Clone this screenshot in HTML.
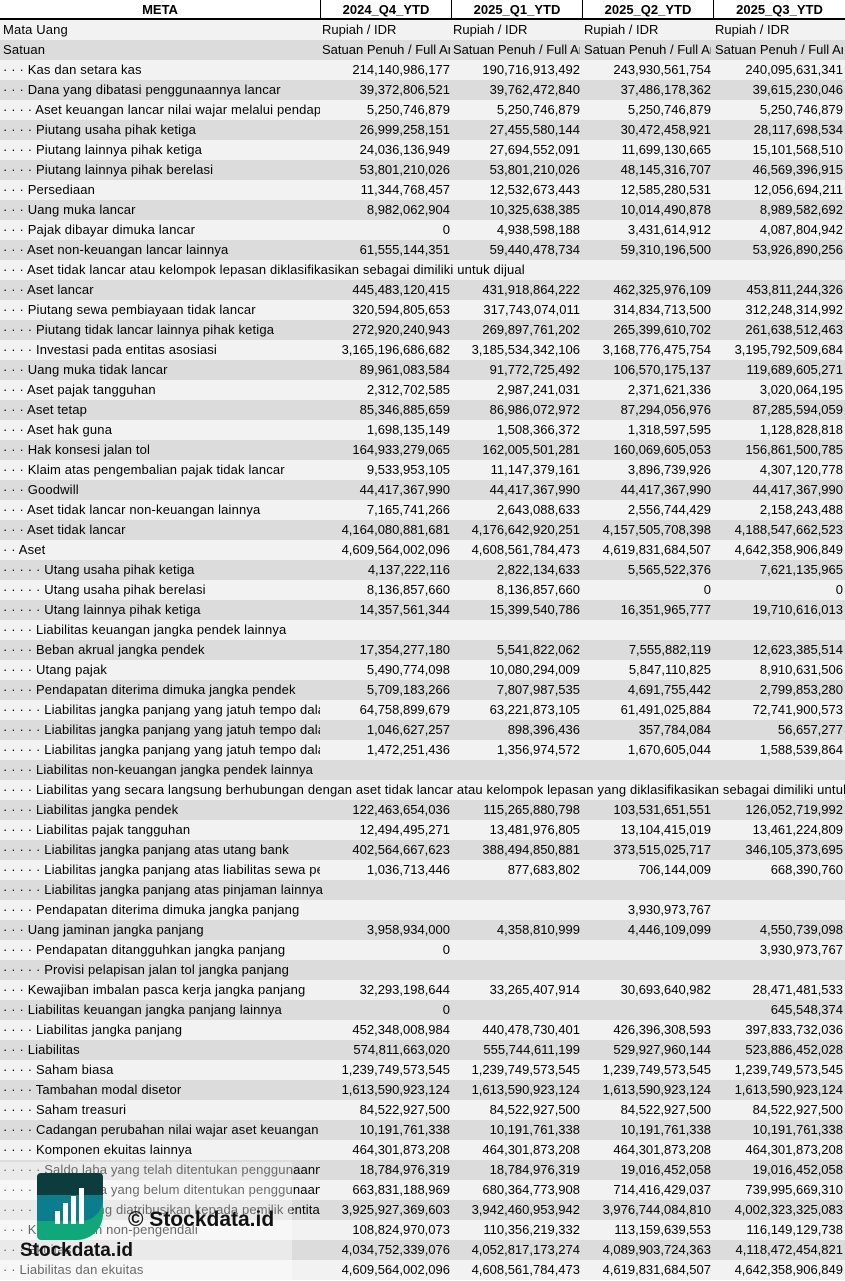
<!DOCTYPE html>
<html><head><meta charset="utf-8">
<style>
*{margin:0;padding:0;box-sizing:border-box}
body{width:845px;height:1281px;overflow:hidden;background:#fff;font-family:"Liberation Sans",Arial,sans-serif;font-size:13px;color:#000;position:relative}
.r{position:absolute;left:0;width:845px;height:20px;line-height:20px;white-space:nowrap}
.r.a{background:#f2f2f2}.r.b{background:#dcdcdc}
.l{position:absolute;left:3px;top:0;height:20px;letter-spacing:0.15px}
.l.c{width:317px;overflow:hidden}
.v{position:absolute;top:0;height:20px;text-align:right;overflow:hidden}
.v1{left:320px;width:130px}.v2{left:451px;width:129px}.v3{left:582px;width:129px}.v4{left:713px;width:130px}
.t{text-align:left;padding-left:2px}
.h{position:absolute;top:0;height:20px;line-height:19px;font-weight:bold;text-align:center;border-bottom:2px solid #000;background:#fff}
.h+.h{border-left:1px solid #000}
</style></head><body>
<div class="h" style="left:0;width:320px">META</div>
<div class="h" style="left:320px;width:131px">2024_Q4_YTD</div>
<div class="h" style="left:451px;width:131px">2025_Q1_YTD</div>
<div class="h" style="left:582px;width:131px">2025_Q2_YTD</div>
<div class="h" style="left:713px;width:132px">2025_Q3_YTD</div>
<div id="rows"></div>
<script>
var R=[
[0,"Mata Uang","Rupiah / IDR","Rupiah / IDR","Rupiah / IDR","Rupiah / IDR",1],
[0,"Satuan","Satuan Penuh / Full Amount","Satuan Penuh / Full Amount","Satuan Penuh / Full Amount","Satuan Penuh / Full Amount",1],
[3,"Kas dan setara kas","214,140,986,177","190,716,913,492","243,930,561,754","240,095,631,341"],
[3,"Dana yang dibatasi penggunaannya lancar","39,372,806,521","39,762,472,840","37,486,178,362","39,615,230,046"],
[4,"Aset keuangan lancar nilai wajar melalui pendapatan komprehensif","5,250,746,879","5,250,746,879","5,250,746,879","5,250,746,879"],
[4,"Piutang usaha pihak ketiga","26,999,258,151","27,455,580,144","30,472,458,921","28,117,698,534"],
[4,"Piutang lainnya pihak ketiga","24,036,136,949","27,694,552,091","11,699,130,665","15,101,568,510"],
[4,"Piutang lainnya pihak berelasi","53,801,210,026","53,801,210,026","48,145,316,707","46,569,396,915"],
[3,"Persediaan","11,344,768,457","12,532,673,443","12,585,280,531","12,056,694,211"],
[3,"Uang muka lancar","8,982,062,904","10,325,638,385","10,014,490,878","8,989,582,692"],
[3,"Pajak dibayar dimuka lancar","0","4,938,598,188","3,431,614,912","4,087,804,942"],
[3,"Aset non-keuangan lancar lainnya","61,555,144,351","59,440,478,734","59,310,196,500","53,926,890,256"],
[3,"Aset tidak lancar atau kelompok lepasan diklasifikasikan sebagai dimiliki untuk dijual","","","",""],
[3,"Aset lancar","445,483,120,415","431,918,864,222","462,325,976,109","453,811,244,326"],
[3,"Piutang sewa pembiayaan tidak lancar","320,594,805,653","317,743,074,011","314,834,713,500","312,248,314,992"],
[4,"Piutang tidak lancar lainnya pihak ketiga","272,920,240,943","269,897,761,202","265,399,610,702","261,638,512,463"],
[4,"Investasi pada entitas asosiasi","3,165,196,686,682","3,185,534,342,106","3,168,776,475,754","3,195,792,509,684"],
[3,"Uang muka tidak lancar","89,961,083,584","91,772,725,492","106,570,175,137","119,689,605,271"],
[3,"Aset pajak tangguhan","2,312,702,585","2,987,241,031","2,371,621,336","3,020,064,195"],
[3,"Aset tetap","85,346,885,659","86,986,072,972","87,294,056,976","87,285,594,059"],
[3,"Aset hak guna","1,698,135,149","1,508,366,372","1,318,597,595","1,128,828,818"],
[3,"Hak konsesi jalan tol","164,933,279,065","162,005,501,281","160,069,605,053","156,861,500,785"],
[3,"Klaim atas pengembalian pajak tidak lancar","9,533,953,105","11,147,379,161","3,896,739,926","4,307,120,778"],
[3,"Goodwill","44,417,367,990","44,417,367,990","44,417,367,990","44,417,367,990"],
[3,"Aset tidak lancar non-keuangan lainnya","7,165,741,266","2,643,088,633","2,556,744,429","2,158,243,488"],
[3,"Aset tidak lancar","4,164,080,881,681","4,176,642,920,251","4,157,505,708,398","4,188,547,662,523"],
[2,"Aset","4,609,564,002,096","4,608,561,784,473","4,619,831,684,507","4,642,358,906,849"],
[5,"Utang usaha pihak ketiga","4,137,222,116","2,822,134,633","5,565,522,376","7,621,135,965"],
[5,"Utang usaha pihak berelasi","8,136,857,660","8,136,857,660","0","0"],
[5,"Utang lainnya pihak ketiga","14,357,561,344","15,399,540,786","16,351,965,777","19,710,616,013"],
[4,"Liabilitas keuangan jangka pendek lainnya","","","",""],
[4,"Beban akrual jangka pendek","17,354,277,180","5,541,822,062","7,555,882,119","12,623,385,514"],
[4,"Utang pajak","5,490,774,098","10,080,294,009","5,847,110,825","8,910,631,506"],
[4,"Pendapatan diterima dimuka jangka pendek","5,709,183,266","7,807,987,535","4,691,755,442","2,799,853,280"],
[5,"Liabilitas jangka panjang yang jatuh tempo dalam satu tahun","64,758,899,679","63,221,873,105","61,491,025,884","72,741,900,573"],
[5,"Liabilitas jangka panjang yang jatuh tempo dalam satu tahun","1,046,627,257","898,396,436","357,784,084","56,657,277"],
[5,"Liabilitas jangka panjang yang jatuh tempo dalam satu tahun","1,472,251,436","1,356,974,572","1,670,605,044","1,588,539,864"],
[4,"Liabilitas non-keuangan jangka pendek lainnya","","","",""],
[4,"Liabilitas yang secara langsung berhubungan dengan aset tidak lancar atau kelompok lepasan yang diklasifikasikan sebagai dimiliki untuk dijual","","","",""],
[4,"Liabilitas jangka pendek","122,463,654,036","115,265,880,798","103,531,651,551","126,052,719,992"],
[4,"Liabilitas pajak tangguhan","12,494,495,271","13,481,976,805","13,104,415,019","13,461,224,809"],
[5,"Liabilitas jangka panjang atas utang bank","402,564,667,623","388,494,850,881","373,515,025,717","346,105,373,695"],
[5,"Liabilitas jangka panjang atas liabilitas sewa pembiayaan","1,036,713,446","877,683,802","706,144,009","668,390,760"],
[5,"Liabilitas jangka panjang atas pinjaman lainnya","","","",""],
[4,"Pendapatan diterima dimuka jangka panjang","","","3,930,973,767",""],
[3,"Uang jaminan jangka panjang","3,958,934,000","4,358,810,999","4,446,109,099","4,550,739,098"],
[4,"Pendapatan ditangguhkan jangka panjang","0","","","3,930,973,767"],
[5,"Provisi pelapisan jalan tol jangka panjang","","","",""],
[3,"Kewajiban imbalan pasca kerja jangka panjang","32,293,198,644","33,265,407,914","30,693,640,982","28,471,481,533"],
[3,"Liabilitas keuangan jangka panjang lainnya","0","","","645,548,374"],
[4,"Liabilitas jangka panjang","452,348,008,984","440,478,730,401","426,396,308,593","397,833,732,036"],
[3,"Liabilitas","574,811,663,020","555,744,611,199","529,927,960,144","523,886,452,028"],
[4,"Saham biasa","1,239,749,573,545","1,239,749,573,545","1,239,749,573,545","1,239,749,573,545"],
[4,"Tambahan modal disetor","1,613,590,923,124","1,613,590,923,124","1,613,590,923,124","1,613,590,923,124"],
[4,"Saham treasuri","84,522,927,500","84,522,927,500","84,522,927,500","84,522,927,500"],
[4,"Cadangan perubahan nilai wajar aset keuangan","10,191,761,338","10,191,761,338","10,191,761,338","10,191,761,338"],
[4,"Komponen ekuitas lainnya","464,301,873,208","464,301,873,208","464,301,873,208","464,301,873,208"],
[5,"Saldo laba yang telah ditentukan penggunaannya","18,784,976,319","18,784,976,319","19,016,452,058","19,016,452,058"],
[5,"Saldo laba yang belum ditentukan penggunaannya","663,831,188,969","680,364,773,908","714,416,429,037","739,995,669,310"],
[4,"Ekuitas yang diatribusikan kepada pemilik entitas induk","3,925,927,369,603","3,942,460,953,942","3,976,744,084,810","4,002,323,325,083"],
[3,"Kepentingan non-pengendali","108,824,970,073","110,356,219,332","113,159,639,553","116,149,129,738"],
[3,"Ekuitas","4,034,752,339,076","4,052,817,173,274","4,089,903,724,363","4,118,472,454,821"],
[2,"Liabilitas dan ekuitas","4,609,564,002,096","4,608,561,784,473","4,619,831,684,507","4,642,358,906,849"]
];
var h="";
R.forEach(function(r,i){
 var y=20+i*20, cls=(i%2==0)?"a":"b";
 var d=""; for(var k=0;k<r[0];k++) d+="\u00b7 ";
 var any=r[2]!==""||r[3]!==""||r[4]!==""||r[5]!=="";
 h+='<div class="r '+cls+'" style="top:'+y+'px"><span class="l'+(any?' c':'')+'">'+d+r[1]+'</span>';
 for(var c=1;c<=4;c++){ if(r[c+1]!=="") h+='<span class="v v'+c+(r[6]?' t':'')+'">'+r[c+1]+'</span>'; }
 h+='</div>';
});
document.getElementById("rows").innerHTML=h;
</script>
<div style="position:absolute;left:0;top:1162px;width:292px;height:119px;background:rgba(255,255,255,0.4)"></div>
<div style="position:absolute;left:37px;top:1173px;width:66px;height:67px;border-radius:4px 4px 26px 4px;overflow:hidden;background:#10a87a">
 <div style="position:absolute;left:0;top:0;width:66px;height:24px;background:#0d3c3c"></div>
 <div style="position:absolute;left:0;top:22px;width:66px;height:26px;background:#0b7d8c;border-radius:0 0 22px 0"></div>
 <div style="position:absolute;left:18px;top:38px;width:5px;height:13px;background:#fff"></div>
 <div style="position:absolute;left:26px;top:30px;width:5px;height:21px;background:#fff"></div>
 <div style="position:absolute;left:34px;top:23px;width:5px;height:28px;background:#fff"></div>
 <div style="position:absolute;left:42px;top:15px;width:5px;height:36px;background:#fff"></div>
</div>
<div style="position:absolute;left:128px;top:1207px;font-size:21px;font-weight:bold;color:#111;line-height:26px">© Stockdata.id</div>
<div style="position:absolute;left:20px;top:1239px;font-size:19px;font-weight:bold;color:#111;line-height:24px">Stockdata.id</div>
</body></html>
